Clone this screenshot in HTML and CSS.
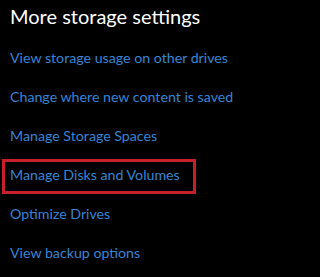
FILE: index.html
```html
<!DOCTYPE html>
<html lang="en">
<head>
<meta charset="utf-8">
<title>More storage settings</title>
<link rel="stylesheet" href="styles.css">
</head>
<body>
<main class="panel">
  <h1 class="title">More storage settings</h1>
  <ul class="links">
    <li class="item"><a class="link" href="#">View storage usage on other drives</a></li>
    <li class="item"><a class="link" href="#">Change where new content is saved</a></li>
    <li class="item"><a class="link" href="#">Manage Storage Spaces</a></li>
    <li class="item highlight"><a class="link" href="#">Manage Disks and Volumes</a></li>
    <li class="item"><a class="link" href="#">Optimize Drives</a></li>
    <li class="item"><a class="link" href="#">View backup options</a></li>
  </ul>
</main>
</body>
</html>
```
FILE: styles.css
```css
html, body {
  margin: 0;
  padding: 0;
  background: #000;
}
body {
  width: 267px;
  height: 277px;
  overflow: hidden;
  font-family: "Lato", "Noto Sans", sans-serif;
}
.panel {
  padding: 2px 0 0 10px;
}
.title {
  margin: 0;
  font-size: 20px;
  line-height: 28px;
  font-weight: 400;
  color: #fff;
}
.links {
  list-style: none;
  margin: 8px 0 0 0;
  padding: 0;
}
.item {
  position: relative;
  height: 39px;
  line-height: 39px;
  font-size: 14.2px;
}
.link {
  color: #3585d6;
  text-decoration: none;
}
.highlight::after {
  content: "";
  position: absolute;
  left: -8px;
  top: 4px;
  width: 188px;
  height: 29px;
  border: 3px solid #c8202a;
}
```
